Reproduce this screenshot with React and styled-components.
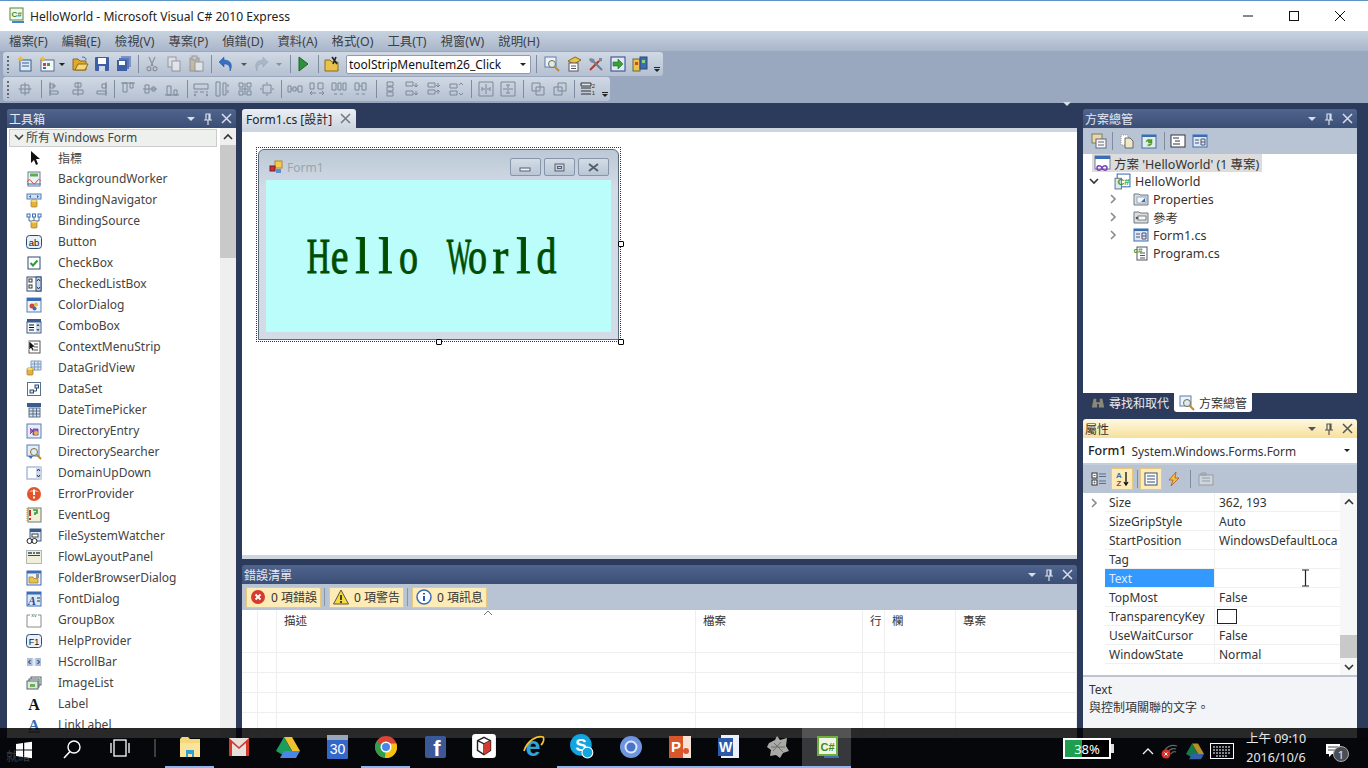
import React from "react";
import styled, { createGlobalStyle } from "styled-components";

const GlobalStyle = createGlobalStyle`
  html, body {
    margin: 0;
    width: 1368px;
    height: 768px;
    overflow: hidden;
    font-family: "Noto Sans", "Noto Sans CJK TC", sans-serif;
    font-size: 12.5px;
    color: #333;
  }
  * { box-sizing: border-box; }
`;

const Page = styled.div`
  width: 1368px;
  height: 768px;
  display: flex;
  flex-direction: column;
  overflow: hidden;
  background: #2c3b5c;
`;

const TitleBar = styled.div`
  height: 31px;
  flex: none;
  display: flex;
  align-items: center;
  padding-left: 9px;
  gap: 5px;
  background: #fff;
  border-top: 1px solid #5b93c4;
`;

const TitleText = styled.span`
  font-size: 12.1px;
  color: #222;
`;

const WinButtons = styled.div`
  margin-left: auto;
  margin-right: 5px;
  display: flex;
`;

const WinButton = styled.div`
  width: 46px;
  height: 30px;
  display: flex;
  align-items: center;
  justify-content: center;
`;

const MenuBar = styled.div`
  height: 20px;
  flex: none;
  display: flex;
  align-items: center;
  gap: 14px;
  padding-left: 9px;
  background: linear-gradient(#c8d3e0, #a9b6ca);
`;

const MenuItem = styled.span`
  font-size: 12.4px;
  color: #3a3f48;
`;

const ToolArea = styled.div`
  height: 52px;
  flex: none;
  display: flex;
  flex-direction: column;
  gap: 1px;
  padding: 1px 0 0 3px;
  background: #9aa8bf;
`;

const ToolRow = styled.div`
  height: 24px;
  width: ${(p) => p.$w}px;
  display: flex;
  align-items: center;
  background: linear-gradient(#d0d9e4, #b5c0d1);
  border-radius: 3px;
`;

const Grip = styled.div`
  width: 10px;
  height: 17px;
  margin-right: ${(p) => p.$mr || 1}px;
  flex: none;
  background: radial-gradient(circle at 1px 1px, #5e6a7c 1px, transparent 1.2px) 4px 0 / 3px 4px repeat-y;
`;

const ToolBtn = styled.div`
  width: ${(p) => p.$w || 22}px;
  height: 22px;
  margin-left: ${(p) => p.$ml || 0}px;
  flex: none;
  display: flex;
  align-items: center;
  justify-content: center;
  opacity: ${(p) => (p.$dim ? 0.5 : 1)};
`;

const ToolSep = styled.div`
  width: ${(p) => p.$w || 6}px;
  height: 18px;
  flex: none;
  position: relative;
  &::after {
    content: "";
    position: absolute;
    left: 50%;
    top: 0;
    bottom: 0;
    width: 1px;
    background: #7f8ca0;
  }
`;

const ComboBox = styled.div`
  width: 185px;
  height: 19px;
  margin-left: 3px;
  flex: none;
  display: flex;
  align-items: center;
  justify-content: space-between;
  padding: 0 4px 0 2px;
  background: #fff;
  border: 1px solid #8e9bb0;
  border-radius: 2px;
  font-size: 12px;
  color: #111;
`;

const Caret = styled.i`
  width: 0;
  height: 0;
  flex: none;
  border-left: ${(p) => p.$s || 3}px solid transparent;
  border-right: ${(p) => p.$s || 3}px solid transparent;
  border-top: ${(p) => p.$s || 3}px solid ${(p) => p.$c || "#222"};
`;

const Overflow = styled.div`
  width: 12px;
  height: 22px;
  flex: none;
  display: flex;
  flex-direction: column;
  align-items: center;
  justify-content: flex-end;
  gap: 1px;
  padding-bottom: 3px;
  &::before {
    content: "";
    width: 6px;
    height: 1px;
    background: #222;
  }
`;

const Dock = styled.div`
  flex: 1;
  min-height: 0;
  display: flex;
  gap: 6px;
  padding: 6px 11px 0 7px;
  background: #2c3b5c;
`;

const LeftPanel = styled.div`
  width: 229px;
  flex: none;
  display: flex;
  flex-direction: column;
`;

const CenterColumn = styled.div`
  width: 835px;
  flex: none;
  display: flex;
  flex-direction: column;
`;

const RightColumn = styled.div`
  width: 274px;
  flex: none;
  display: flex;
  flex-direction: column;
`;

const PanelHeader = styled.div`
  height: 19px;
  flex: none;
  display: flex;
  align-items: center;
  justify-content: space-between;
  padding: 0 4px 0 2px;
  border-radius: 3px 3px 0 0;
  background: ${(p) =>
    p.$active ? "linear-gradient(#fdf8e2, #f7e09a)" : "linear-gradient(#4f658e, #3b4e75)"};
  color: ${(p) => (p.$active ? "#333" : "#e6eaf2")};
  font-size: 12px;
`;

const HeaderTools = styled.div`
  display: flex;
  align-items: center;
  gap: 7px;
`;

const ToolboxBody = styled.div`
  flex: 1;
  min-height: 0;
  display: flex;
  background: #fff;
`;

const ToolboxList = styled.div`
  width: 213px;
  flex: none;
  overflow: hidden;
`;

const GroupHeader = styled.div`
  height: 18px;
  margin: 1px 3px 0 2px;
  display: flex;
  align-items: center;
  gap: 2px;
  padding: 0 0 2px 4px;
  background: #eef0ee;
  border: 1px solid #ccc;
  color: #444;
  font-size: 12px;
`;

const ToolItem = styled.div`
  height: 21px;
  display: flex;
  align-items: center;
  gap: 16px;
  padding-left: 19px;
  color: #444;
  font-size: 12px;
`;

const ScrollTrack = styled.div`
  width: ${(p) => p.$w || 15}px;
  flex: none;
  display: flex;
  flex-direction: column;
  background: #efefef;
`;

const ScrollArrow = styled.div`
  height: ${(p) => p.$h || 17}px;
  flex: none;
  display: flex;
  align-items: center;
  justify-content: center;
`;

const ScrollThumb = styled.div`
  height: ${(p) => p.$h}px;
  margin-top: ${(p) => p.$top || 0}px;
  flex: none;
  background: #c9c9c9;
`;

const TabStrip = styled.div`
  height: 19px;
  flex: none;
  display: flex;
  align-items: flex-end;
  justify-content: space-between;
  padding-right: 6px;
`;

const TabMenu = styled.div`
  padding-bottom: 5px;
`;

const DocTab = styled.div`
  width: 114px;
  height: 19px;
  display: flex;
  align-items: center;
  justify-content: space-between;
  padding: 0 5px 0 4px;
  border-radius: 3px 3px 0 0;
  background: linear-gradient(#eceff4, #cfd6e1);
  color: #222;
  font-size: 12px;
`;

const StripeBar = styled.div`
  height: 4px;
  flex: none;
  background: #cdd5e0;
`;

const DesignSurface = styled.div`
  height: 423px;
  flex: none;
  padding: 15px 0 0 14px;
  background: #fff;
`;

const Selection = styled.div`
  position: relative;
  width: 365px;
  height: 195px;
  padding: 1px;
  border: 1px dotted #333;
`;

const Handle = styled.i`
  position: absolute;
  left: ${(p) => p.$x}px;
  top: ${(p) => p.$y}px;
  width: 6px;
  height: 6px;
  background: #fff;
  border: 1px solid #000;
  border-radius: 1px;
`;

const FormWindow = styled.div`
  height: 100%;
  display: flex;
  flex-direction: column;
  padding: 0 7px 7px;
  background: linear-gradient(#bcc8d6, #d2dbe6 20%);
  border: 1px solid #5a6a7c;
  border-radius: 6px 6px 0 0;
`;

const FormTitle = styled.div`
  height: 30px;
  flex: none;
  display: flex;
  align-items: center;
  gap: 4px;
  padding: 4px 2px 0 3px;
  color: #9aa4b1;
  font-size: 12px;
`;

const FormButtons = styled.div`
  margin-left: auto;
  display: flex;
  gap: 3px;
`;

const FormButton = styled.div`
  width: 31px;
  height: 18px;
  display: flex;
  align-items: center;
  justify-content: center;
  border: 1px solid #8795a8;
  border-radius: 2px;
  background: linear-gradient(#d3dce7, #bac6d5);
`;

const FormClient = styled.div`
  flex: 1;
  display: flex;
  align-items: center;
  justify-content: center;
  padding: 0 14px 0 0;
  background: #bbfdfb;
`;

const HelloLabel = styled.div`
  display: flex;
  font-family: "Liberation Serif", serif;
  font-size: 38px;
  line-height: 1;
  color: #004d00;
  -webkit-text-stroke: 0.7px #004d00;
  white-space: pre;
`;

const HelloChar = styled.span`
  display: inline-block;
  width: 23px;
  text-align: center;
  transform: scale(${(p) => p.$x}, 1.32);
`;

const DockGap = styled.div`
  height: 6px;
  flex: none;
`;

const PanelToolbar = styled.div`
  height: ${(p) => p.$h || 26}px;
  flex: none;
  display: flex;
  align-items: center;
  padding-left: ${(p) => p.$pl || 0}px;
  background: #b8c4d4;
`;

const FilterBtn = styled.div`
  height: 21px;
  display: flex;
  align-items: center;
  gap: 5px;
  padding: 0 3px 0 3px;
  background: #fdebb8;
  border: 1px solid #e6c97e;
  font-size: 12px;
  color: #333;
`;

const FilterSep = styled.i`
  width: 1px;
  height: 18px;
  margin: 0 4px 0 3px;
  background: #8595ab;
`;

const ErrorList = styled.div`
  position: relative;
  flex: 1;
  min-height: 0;
  overflow: hidden;
  background: #fff;
`;

const ErrorRow = styled.div`
  height: ${(p) => p.$h || 20}px;
  display: grid;
  grid-template-columns: 16px 19px 419px 167px 22px 71px 121px;
  border-bottom: 1px solid #eee;
`;

const ErrorCell = styled.div`
  padding: 2px 0 0 7px;
  border-right: 1px solid #eee;
  font-size: 11.5px;
  color: #333;
`;

const SortMark = styled.svg`
  position: absolute;
  left: 241px;
  top: 0;
  width: 10px;
  height: 6px;
`;

const SolutionPanel = styled.div`
  height: 310px;
  flex: none;
  display: flex;
  flex-direction: column;
`;

const TreeBody = styled.div`
  flex: 1;
  background: #fff;
`;

const TreeRow = styled.div`
  width: ${(p) => (p.$sel ? "170px" : "auto")};
  height: 18px;
  display: flex;
  align-items: center;
  margin-left: ${(p) => (p.$sel ? 9 : 0)}px;
  padding-left: ${(p) => (p.$sel ? 2 : p.$indent)}px;
  gap: 4px;
  background: ${(p) => (p.$sel ? "#dcdcdc" : "transparent")};
  color: #333;
  white-space: nowrap;
`;

const TreeChevron = styled.div`
  width: 16px;
  margin-right: 8px;
  flex: none;
  display: flex;
  justify-content: center;
`;

const BottomTabs = styled.div`
  height: 26px;
  flex: none;
  display: flex;
  align-items: flex-start;
  padding-left: 3px;
`;

const BottomTab = styled.div`
  height: 19px;
  display: flex;
  align-items: center;
  gap: 4px;
  padding: 0 5px;
  color: ${(p) => (p.$active ? "#333" : "#e6eaf2")};
  background: ${(p) => (p.$active ? "#fff" : "transparent")};
  border-radius: 0 0 3px 3px;
  font-size: 12px;
`;

const PropsPanel = styled.div`
  flex: 1;
  min-height: 0;
  display: flex;
  flex-direction: column;
`;

const ObjectBar = styled.div`
  height: 27px;
  flex: none;
  display: flex;
  align-items: center;
  padding: 0 7px 0 5px;
  gap: 5px;
  background: #fff;
  color: #333;
  border-bottom: 2px solid #c4cedb;
`;

const ObjectName = styled.span`
  font-weight: 500;
  color: #222;
`;

const ObjectType = styled.span`
  flex: 1;
  font-size: 11.9px;
`;

const ActiveTool = styled.div`
  width: 22px;
  height: 22px;
  display: flex;
  align-items: center;
  justify-content: center;
  background: #fdebb8;
  border: 1px solid #e6c97e;
`;

const PropGrid = styled.div`
  position: relative;
  height: 182px;
  flex: none;
  display: flex;
  background: #fff;
`;

const PropList = styled.div`
  flex: 1;
  min-width: 0;
`;

const PropRow = styled.div`
  height: 19px;
  display: grid;
  grid-template-columns: 22px 110px 125px;
  align-items: stretch;
  font-size: 12px;
`;

const PropGutter = styled.div`
  display: flex;
  align-items: center;
  justify-content: center;
`;

const PropName = styled.div`
  display: flex;
  align-items: center;
  padding-left: 4px;
  background: ${(p) => (p.$sel ? "#3399ff" : "transparent")};
  color: ${(p) => (p.$sel ? "#dceeff" : "#333")};
  border-bottom: 1px solid #f0f0f0;
  border-right: 1px solid #f0f0f0;
`;

const PropValue = styled.div`
  display: flex;
  align-items: center;
  padding-left: 4px;
  white-space: nowrap;
  color: #333;
  border-bottom: 1px solid #f0f0f0;
`;

const ColorSwatch = styled.i`
  width: 20px;
  height: 15px;
  margin-left: -2px;
  background: #fff;
  border: 1px solid #222;
`;

const TextCursor = styled.svg`
  position: absolute;
  left: 218px;
  top: 76px;
  width: 9px;
  height: 18px;
`;

const PropScroll = styled(ScrollTrack)`
  width: 17px;
  background: #f7f7f7;
`;

const Description = styled.div`
  flex: 1;
  padding: 4px 6px;
  background: #f3f4f7;
  border-top: 2px solid #bfc5cf;
  font-size: 12px;
  line-height: 18px;
  color: #333;
`;

const Taskbar = styled.div`
  position: relative;
  height: 30px;
  flex: none;
  display: flex;
  align-items: flex-end;
  background: #05070a;
  &::before {
    content: "";
    position: absolute;
    left: 0;
    right: 0;
    top: -10px;
    height: 10px;
    background: rgba(0, 0, 0, 0.84);
  }
`;

const StatusGhost = styled.span`
  position: absolute;
  left: 6px;
  top: 9px;
  font-size: 12px;
  color: #3c3f44;
`;

const TaskSlot = styled.div`
  position: relative;
  width: ${(p) => p.$w || 49}px;
  height: ${(p) => (p.$active ? 40 : 30)}px;
  flex: none;
  display: flex;
  align-items: flex-end;
  justify-content: center;
  padding-bottom: 7px;
  background: ${(p) => (p.$active ? "rgba(255,255,255,0.2)" : "transparent")};
  border-bottom: ${(p) => (p.$run ? "2px solid #8fb4f0" : "2px solid transparent")};
  background-clip: padding-box;
`;

const TaskDivider = styled.div`
  width: 21px;
  height: 30px;
  flex: none;
  display: flex;
  justify-content: center;
  padding: 1px 0 11px;
  &::before {
    content: "";
    width: 2px;
    background: #3a3d42;
  }
`;

const Battery = styled.div`
  position: relative;
  width: 48px;
  height: 21px;
  margin: 0 26px 9px 212px;
  flex: none;
  display: flex;
  align-items: center;
  justify-content: center;
  border: 2px solid #fff;
  background: linear-gradient(90deg, #1e9e4e 38%, #000 38%);
  color: #fff;
  font-size: 13px;
  &::after {
    content: "";
    position: absolute;
    right: -5px;
    top: 4px;
    width: 3px;
    height: 9px;
    background: #ddd;
  }
`;

const TrayIcon = styled.div`
  width: ${(p) => p.$w || 24}px;
  height: 30px;
  flex: none;
  display: flex;
  align-items: center;
  justify-content: center;
  padding-bottom: 5px;
`;

const Clock = styled.div`
  position: relative;
  width: 80px;
  height: 38px;
  flex: none;
  display: flex;
  flex-direction: column;
  align-items: center;
  justify-content: space-between;
  padding-bottom: 1px;
  color: #e8e8e8;
  font-size: 12.5px;
  line-height: 18px;
`;

const NotifyWrap = styled.div`
  position: relative;
  width: 30px;
  height: 30px;
  margin-left: 2px;
  flex: none;
  display: flex;
  align-items: center;
  justify-content: center;
  padding-bottom: 5px;
`;

const NotifyBadge = styled.span`
  position: absolute;
  left: 15px;
  top: 8px;
  width: 16px;
  height: 16px;
  display: flex;
  align-items: center;
  justify-content: center;
  border-radius: 50%;
  background: #4a4d52;
  border: 1px solid #aaa;
  color: #eee;
  font-size: 11px;
`;

const IconSvg = styled.svg`
  width: ${(p) => p.$s}px;
  height: ${(p) => p.$s}px;
  flex: none;
  display: block;
  overflow: visible;
`;

const I = ({ s = 16, vb = "0 0 16 16", children }) => (
  <IconSvg $s={s} viewBox={vb}>
    {children}
  </IconSvg>
);

const Chevron = ({ dir = "right", c = "#8a8a8a", s = 10 }) => {
  const d = { right: "M3 1l4 4-4 4", down: "M1 3l4 4 4-4", up: "M1 7l4-4 4 4" }[dir];
  return (
    <I s={s} vb="0 0 10 10">
      <path d={d} fill="none" stroke={c} strokeWidth="1.6" />
    </I>
  );
};

const HeaderButtons = ({ c = "#d9dfea" }) => (
  <HeaderTools>
    <Caret $s={4} $c={c} />
    <I s={12} vb="0 0 12 12">
      <path d="M4 1h4v6H4zM2 7h8M6 7v5M7 1v6" fill="none" stroke={c} strokeWidth="1.2" />
    </I>
    <I s={11} vb="0 0 11 11">
      <path d="M1 1l9 9M10 1l-9 9" stroke={c} strokeWidth="1.5" />
    </I>
  </HeaderTools>
);

const db = (x, y) => (
  <g>
    <rect x={x} y={y} width="6" height="7" rx="1" fill="#e2b23a" stroke="#a37a1c" strokeWidth=".7" />
    <ellipse cx={x + 3} cy={y + 1} rx="3" ry="1" fill="#f7df8c" />
  </g>
);

const toolIcons = {
  pointer: <path d="M5 1v12l3-3 2 5 2-1-2-5h4z" fill="#111" />,
  BackgroundWorker: (
    <g>
      <rect x="2" y="1" width="12" height="14" fill="#eef2f6" stroke="#6b7c93" />
      <rect x="4" y="2.5" width="8" height="3" fill="#59b04a" />
      <path d="M1 11c2-3 3-3 5 0s3 2 5-1 2-1 4 0" fill="none" stroke="#d0453a" />
      <path d="M1 13h14" stroke="#3b6db5" />
    </g>
  ),
  BindingNavigator: (
    <g>
      <rect x="1" y="2" width="14" height="5" fill="#cfe0f3" stroke="#5a7fb0" />
      <path d="M3 4.5l2-1.5v3zM13 4.5l-2-1.5v3z" fill="#2a62a8" />
      {db(5, 8)}
    </g>
  ),
  BindingSource: (
    <g>
      <path d="M3 4v4h10V4M8 4v5" fill="none" stroke="#3b6db5" />
      <rect x="1" y="1" width="3" height="3" fill="#fff" stroke="#3b6db5" />
      <rect x="6.5" y="1" width="3" height="3" fill="#fff" stroke="#3b6db5" />
      <rect x="12" y="1" width="3" height="3" fill="#fff" stroke="#3b6db5" />
      {db(5, 8)}
    </g>
  ),
  Button: (
    <g>
      <rect x=".5" y="1.5" width="15" height="13" rx="3" fill="#e9f0f8" stroke="#2d4a73" />
      <text x="8" y="11.5" fontSize="9.5" textAnchor="middle" fill="#111" fontFamily="Liberation Sans">ab</text>
    </g>
  ),
  CheckBox: (
    <g>
      <rect x="2" y="2" width="12" height="12" fill="#fff" stroke="#2d4a73" />
      <path d="M4.5 8l2.5 2.5 4.5-5" fill="none" stroke="#2c9a3a" strokeWidth="2" />
    </g>
  ),
  CheckedListBox: (
    <g>
      <rect x="1" y="1" width="14" height="14" fill="#fff" stroke="#2d4a73" />
      <rect x="3" y="3" width="3" height="3" fill="#fff" stroke="#333" />
      <rect x="3" y="9" width="3" height="3" fill="#fff" stroke="#333" />
      <rect x="10" y="1" width="5" height="14" fill="#c9d8ea" stroke="#2d4a73" />
      <path d="M11 5l1.5-2 1.5 2M11 11l1.5 2 1.5-2" fill="none" stroke="#333" />
    </g>
  ),
  ColorDialog: (
    <g>
      <rect x="1" y="1" width="14" height="14" fill="#eef3fa" stroke="#5a7fb0" />
      <rect x="1" y="1" width="14" height="3" fill="#3b6db5" />
      <circle cx="6" cy="9" r="2.5" fill="#d0453a" />
      <circle cx="10" cy="7.5" r="2" fill="#e8b93c" />
      <circle cx="8.5" cy="11.5" r="2" fill="#3b6db5" />
    </g>
  ),
  ComboBox: (
    <g>
      <rect x="1" y="1" width="14" height="3" fill="#3b5c8a" />
      <rect x="1" y="4" width="14" height="11" fill="#f4f7fb" stroke="#3b5c8a" />
      <path d="M3 7h5M3 9.5h5M3 12h5" stroke="#111" />
      <rect x="10" y="5" width="4" height="9" fill="#c9d8ea" />
      <path d="M11 8l1-1.500 1 1.500M11 11l1 1.500 1-1.500" fill="none" stroke="#333" />
    </g>
  ),
  ContextMenuStrip: (
    <g>
      <rect x="3" y="2" width="11" height="12" fill="#fff" stroke="#555" />
      <path d="M8 5h4M8 8h4M8 11h4" stroke="#444" />
      <path d="M3 2v9l2-2 1.500 3 1.500-1-1.500-3h3z" fill="#111" stroke="#fff" strokeWidth=".5" />
    </g>
  ),
  DataGridView: (
    <g>
      <path d="M5 1h10v9H5z" fill="#dbe6f3" stroke="#7f9cc2" />
      <path d="M5 4h10M5 7h10M8.500 1v9M12 1v9" stroke="#7f9cc2" />
      {db(1, 8)}
    </g>
  ),
  DataSet: (
    <g>
      <rect x="1.500" y="1.500" width="13" height="13" fill="#fff" stroke="#5a6f8a" />
      <rect x="4" y="9" width="3.500" height="3" fill="#cfe0f3" stroke="#2d4a73" />
      <rect x="9" y="4" width="3.500" height="3" fill="#cfe0f3" stroke="#2d4a73" />
      <path d="M7.500 10h3V7" fill="none" stroke="#2d4a73" />
    </g>
  ),
  DateTimePicker: (
    <g>
      <rect x="1" y="1" width="14" height="4" fill="#3b5c8a" />
      <rect x="3" y="6" width="11" height="9" fill="#dbe4ef" stroke="#5a6f8a" />
      <path d="M3 9h11M3 12h11M7 6v9M10.500 6v9" stroke="#5a6f8a" />
    </g>
  ),
  DirectoryEntry: (
    <g>
      <rect x="1" y="1" width="14" height="14" fill="#e6ecfa" stroke="#5a7fb0" />
      <path d="M4 5l3 3-3 3M7 6h5v6H7z" fill="#a15ac0" stroke="#5a3a8c" strokeWidth=".8" />
      <circle cx="10" cy="10" r="2" fill="#e8b93c" />
    </g>
  ),
  DirectorySearcher: (
    <g>
      <rect x="1" y="1" width="12" height="11" fill="#e6ecfa" stroke="#5a7fb0" />
      <circle cx="8" cy="8" r="3.500" fill="#d8ecf7" stroke="#8a6b2e" />
      <path d="M10.500 10.500L15 15" stroke="#c08a30" strokeWidth="2" />
      <path d="M2 12l3 3 2-3z" fill="#3b6db5" />
    </g>
  ),
  DomainUpDown: (
    <g>
      <rect x="1" y="2" width="14" height="12" fill="#fff" stroke="#7f9cc2" />
      <rect x="10" y="2" width="5" height="12" fill="#c9d8ea" />
      <path d="M11 6l1.500-2 1.500 2M11 10l1.500 2 1.500-2" fill="none" stroke="#333" />
    </g>
  ),
  ErrorProvider: (
    <g>
      <circle cx="8" cy="8" r="7" fill="#e2542c" />
      <path d="M3 6a5.500 4 0 0 1 10 0z" fill="#f59a7c" />
      <path d="M8 3.500v5.500M8 10.500v2" stroke="#fff" strokeWidth="2" />
    </g>
  ),
  EventLog: (
    <g>
      <rect x="2" y="1" width="13" height="14" fill="#f2f0d8" stroke="#6d7f6a" />
      <path d="M4 3v6M4 11v2" stroke="#d0322a" strokeWidth="2" />
      <path d="M7 3h4v3H9v2" fill="none" stroke="#2c9a3a" strokeWidth="1.600" />
      <path d="M1 1v14" stroke="#c08a30" strokeDasharray="1 1" />
    </g>
  ),
  FileSystemWatcher: (
    <g>
      <rect x="4" y="1" width="11" height="12" fill="#dbe6f3" stroke="#3b5c8a" />
      <path d="M4 1h11v3H4z" fill="#3b5c8a" />
      <circle cx="3.500" cy="13" r="2.500" fill="#fff" stroke="#222" />
      <circle cx="8.500" cy="13" r="2.500" fill="#fff" stroke="#222" />
      <rect x="6" y="6" width="6" height="3" fill="#fff" stroke="#444" />
    </g>
  ),
  FlowLayoutPanel: (
    <g>
      <rect x=".5" y="1.500" width="15" height="13" fill="#eef0dc" stroke="#777" strokeDasharray="1 1" />
      <path d="M2 4h4M7 4h2M10 4h4" stroke="#2d4a73" strokeWidth="1.500" />
      <path d="M2 6.500h12" stroke="#2d4a73" />
    </g>
  ),
  FolderBrowserDialog: (
    <g>
      <rect x="1" y="1" width="14" height="14" fill="#eef3fa" stroke="#3b6db5" />
      <rect x="1" y="1" width="14" height="2.500" fill="#3b6db5" />
      <path d="M3 7h4l1 1.500h4V13H3z" fill="#e8c24a" stroke="#9c7a1e" strokeWidth=".7" />
      <path d="M10 5h3M10 7h3" stroke="#333" />
    </g>
  ),
  FontDialog: (
    <g>
      <rect x="1" y="1" width="14" height="14" fill="#dde8f6" stroke="#3b6db5" />
      <rect x="1" y="1" width="14" height="2.500" fill="#3b6db5" />
      <text x="6" y="14" fontSize="12" fontWeight="700" fontStyle="italic" textAnchor="middle" fill="#1c4f9c" fontFamily="Liberation Serif">A</text>
      <path d="M11 7h3M11 10h3" stroke="#333" />
    </g>
  ),
  GroupBox: (
    <g>
      <path d="M4 3H1v12h14V3h-3" fill="none" stroke="#8a8a8a" />
      <text x="8" y="5" fontSize="5.500" textAnchor="middle" fill="#555" fontFamily="Liberation Sans">xv</text>
    </g>
  ),
  HelpProvider: (
    <g>
      <rect x=".5" y="1.500" width="15" height="13" rx="3" fill="#e9f0f8" stroke="#2d4a73" />
      <text x="8" y="11.500" fontSize="9" textAnchor="middle" fill="#111" fontFamily="Liberation Sans">F1</text>
    </g>
  ),
  HScrollBar: (
    <g>
      <rect x="1" y="4" width="14" height="8" fill="#c4d3ea" />
      <rect x="1" y="4" width="5" height="8" fill="#aabfe0" />
      <rect x="10" y="4" width="5" height="8" fill="#aabfe0" />
      <path d="M4.500 6l-2 2 2 2M11.500 6l2 2-2 2" fill="none" stroke="#222" />
      <path d="M8 4v8" stroke="#fff" />
    </g>
  ),
  ImageList: (
    <g>
      <rect x="5" y="2" width="10" height="8" fill="#eef2f6" stroke="#566" />
      <rect x="3" y="4" width="10" height="8" fill="#eef2f6" stroke="#566" />
      <rect x="1" y="6" width="11" height="8" fill="#dfeadf" stroke="#566" />
      <rect x="4" y="9" width="5" height="3" fill="#6fae5e" />
    </g>
  ),
  Label: <text x="8" y="14" fontSize="16" fontWeight="700" textAnchor="middle" fill="#111" fontFamily="Liberation Serif">A</text>,
  LinkLabel: (
    <g>
      <text x="8" y="13" fontSize="15" fontWeight="700" textAnchor="middle" fill="#3b6db5" fontFamily="Liberation Serif">A</text>
      <path d="M2 15h12" stroke="#3b6db5" />
    </g>
  ),
};

const toolItems = [
  ["pointer", "指標"],
  ...Object.keys(toolIcons).slice(1).map((k) => [k, k]),
];

const ToolbarGlyph = ({ d, c = "#7d8898", fill = "none", w = 1 }) => (
  <I>
    <path d={d} fill={fill} stroke={c} strokeWidth={w} />
  </I>
);

const layoutGlyphs = [
  "M1.500 8h13M8 1.500v13M4 4h8v8H4z",
  "M2 1v14M2 3h4v4H2zM2 10h8v3H2zM8 5H4",
  "M8 1v14M5 2h6v4H5zM3 9h10v4H3z",
  "M14 1v14M10 3h4v4h-4zM5 10h9v3H5z",
  "M1 2h14M3 2v9h4V2zM10 2v5h3V2z",
  "M1 8h14M3 4h4v8H3zM10 6h3v4h-3z",
  "M1 14h14M3 5h4v9H3zM10 9h3v5h-3z",
  "M1 3h14v5H1zM1 11h4M7 11h4M13 11h2M3 13l-2 1 2 1M13 13l2 1-2 1",
  "M1 1h4v14H1zM8 2h3v12H8zM13 3v3M13 9v3",
  "M2 2h4v4H2zM10 2h4v4h-4zM2 10h4v4H2zM10 10h4v4h-4zM8 2v12M2 8h12",
  "M4 4h8v8H4zM1 8h2M13 8h2M8 1v2M8 13v2",
  "M1 5h3v6H1zM6 6h3v4H6zM11 5h4v6h-4zM4 8h2M9 8h2",
  "M1 2h4v6H1zM9 2h5v6H9zM2 12h5M10 12h5M3 10l-2 2 2 2M13 10l2 2-2 2",
  "M1 2h4v7H1zM7 2h3v7H7zM12 2h3v7h-3zM3 13h3M9 13h3",
  "M2 2h4v7H2zM9 2h4v7H9zM6 5h3M3 13h3M9 13h3",
  "M5 1h6v4H5zM5 6h6v4H5zM5 11h6v4H5zM8 5v1M8 10v1",
  "M2 1h7v4H2zM2 10h7v4H2zM12 2v4M12 10v4M10 4l2 2 2-2M10 12l2 2 2-2",
  "M2 2h7v4H2zM2 9h7v4H2zM12 2v4M12 9v4M10 11l2-2 2 2M10 4l2 2 2-2",
  "M2 3h7v4H2zM2 10h7v4H2zM11 4l2-2 2 2M11 12l2 2 2-2",
  "M1 1h14v14H1zM8 3v10M4 8h3M9 8h3M4 6v4M12 6v4",
  "M1 1h14v14H1zM3 8h10M8 4v3M8 9v3M6 4h4M6 12h4",
  "M2 2h8v8H2zM6 6h8v8H6z",
  "M6 2h8v8H6zM2 6h8v8H2z",
];

// separator width after the glyph at that index
const row2Seps = { 0: 9, 3: 6, 6: 7, 10: 6, 14: 7, 18: 8, 20: 8, 22: 6 };

const Solution = {
  view: (
    <I>
      <rect x="1" y="1" width="10" height="9" fill="#e9d9a6" stroke="#7d7a68" />
      <rect x="5" y="6" width="10" height="9" fill="#f5f7fa" stroke="#667" />
      <path d="M7 9h6M7 12h6" stroke="#667" />
    </I>
  ),
  copy: (
    <I>
      <path d="M2 2h7v10H2z" fill="#fff" stroke="#999" strokeDasharray="1 1" />
      <path d="M6 5h5l3 3v7H6z" fill="#eee8c8" stroke="#666" />
    </I>
  ),
  refresh: (
    <I>
      <rect x="1" y="2" width="14" height="13" fill="#e4eee4" stroke="#3b6db5" />
      <path d="M1 2h14v2H1z" fill="#3b6db5" />
      <path d="M5 9a3 3 0 0 1 5-2l1-1v4H7l1-1a2 2 0 0 0-3 0zM11 10a3 3 0 0 1-5 2" fill="#4e9a33" stroke="#4e9a33" strokeWidth=".5" />
    </I>
  ),
  code: (
    <I>
      <rect x="1" y="2" width="14" height="12" fill="#fff" stroke="#334" />
      <path d="M3 5h6M5 8h5M3 11h7" stroke="#334" />
    </I>
  ),
  design: (
    <I>
      <rect x="1" y="2" width="14" height="12" fill="#dde8f6" stroke="#3b6db5" />
      <path d="M1 2h14v2H1z" fill="#3b6db5" />
      <path d="M3 7h4M3 10h4M9 6h4v6H9zM9 9h4" stroke="#556" fill="none" />
    </I>
  ),
};

const SolutionIcon = () => (
  <I>
    <rect x="1" y="1" width="15" height="13" fill="#fff" stroke="#6b7c93" />
    <rect x="1" y="1" width="15" height="3" fill="#3b6db5" />
    <path d="M3 13c0-3 4-3 5 0s5 3 5 0-4-3-5 0-5 3-5 0z" fill="none" stroke="#7a3fb8" strokeWidth="1.500" />
  </I>
);

const ProjectIcon = () => (
  <I s={17}>
    <rect x="3" y="1" width="12" height="12" fill="#fff" stroke="#3b6db5" />
    <rect x="1" y="5" width="6" height="10" fill="#dce8f5" stroke="#6b7c93" />
    <text x="9" y="11" fontSize="9" fontWeight="700" textAnchor="middle" fill="#2c9a3a" fontFamily="Liberation Sans">C#</text>
  </I>
);

const PropertiesIcon = () => (
  <I>
    <path d="M1 3h5l1 1h8v10H1z" fill="#d7e0ea" stroke="#6e7a8a" />
    <rect x="4" y="6" width="9" height="6" fill="#f4f7fb" stroke="#6e7a8a" strokeWidth=".6" />
    <path d="M8 11l4-4v4z" fill="#3b6db5" />
  </I>
);

const RefsIcon = () => (
  <I>
    <path d="M1 3h5l1 1h8v10H1z" fill="#dedede" stroke="#6e7a8a" />
    <rect x="5" y="7" width="8" height="4" fill="#f4f7fb" stroke="#555" strokeWidth=".7" />
    <circle cx="4" cy="9" r="1.300" fill="#555" />
  </I>
);

const FindIcon = () => (
  <I>
    <rect x="1" y="1" width="11" height="10" fill="#eef3fa" stroke="#5a7fb0" />
    <circle cx="8" cy="8" r="3.500" fill="#d8ecf7" stroke="#7c6a3e" />
    <path d="M10.500 10.500L15 15" stroke="#c08a30" strokeWidth="2" />
  </I>
);

const Windows = () => (
  <I s={18} vb="0 0 18 18">
    <path d="M1 3l7-1v6.500H1zM9.200 1.800L17 .8v7.700H9.200zM1 9.500h7V16l-7-1zM9.200 9.500H17v7.700l-7.800-1.100z" fill="#fff" />
  </I>
);

const taskIcons = [
  <I s={24} vb="0 0 24 24" key="folder">
    <path d="M2 4l2-2h6l2 2h10v18H2z" fill="#f5d77d" />
    <path d="M2 8h20v14H2z" fill="#fbe39a" />
    <path d="M8 15h8v7h-2v-3h-4v3H8z" fill="#2f9fd8" />
  </I>,
  <I s={24} vb="0 0 24 24" key="gmail">
    <rect x="2" y="3" width="20" height="18" fill="#e6e1dc" />
    <path d="M2 3l10 9 10-9v18h-3V8l-7 6-7-6v13H2z" fill="#d33a2c" />
  </I>,
  <I s={24} vb="0 0 24 24" key="drive">
    <path d="M8 2h8l8 14h-8z" fill="#f4c12e" />
    <path d="M8 2l8 14-4 7L0 16z" fill="#1da462" opacity=".95" />
    <path d="M4 23l4-7h16l-4 7z" fill="#4a86e8" />
  </I>,
  <I s={24} vb="0 0 24 24" key="cal">
    <rect x="2" y="0" width="21" height="24" rx="1" fill="#3468c8" />
    <rect x="2" y="0" width="21" height="5" fill="#9aa7b8" />
    <text x="12.500" y="19" fontSize="14" textAnchor="middle" fill="#fff" fontFamily="Liberation Sans">30</text>
  </I>,
  <I s={24} vb="0 0 24 24" key="chrome">
    <circle cx="12" cy="12" r="11" fill="#db4437" />
    <path d="M12 12L2.500 6.500A11 11 0 0 0 12 23l6-11z" fill="#2f9e4f" />
    <path d="M12 12l-1 11A11 11 0 0 0 22.500 8.500H12z" fill="#f4c20d" />
    <circle cx="12" cy="12" r="5.500" fill="#fff" />
    <circle cx="12" cy="12" r="4" fill="#4a86e8" />
  </I>,
  <I s={24} vb="0 0 24 24" key="fb">
    <rect x="2" y="1" width="21" height="22" rx="2" fill="#3b5998" />
    <text x="14" y="21" fontSize="22" fontWeight="700" textAnchor="middle" fill="#fff" fontFamily="Liberation Sans">f</text>
  </I>,
  <I s={26} vb="0 0 24 24" key="cube">
    <rect x="1" y="1" width="22" height="22" rx="3" fill="#fff" />
    <path d="M12 4l6 3v9l-6 4-6-4V7z" fill="#fff" stroke="#222" strokeWidth="1.300" />
    <path d="M6 7l6 3 6-3M12 10v10" fill="none" stroke="#222" strokeWidth="1.300" />
    <path d="M12 10l6-3v9l-6 4z" fill="#d13b32" />
  </I>,
  <I s={24} vb="0 0 24 24" key="ie">
    <text x="12" y="21" fontSize="27" fontWeight="700" textAnchor="middle" fill="#2ea3dc" fontFamily="Liberation Sans">e</text>
    <path d="M3 16C6 6 16 0 22 2c2 2 0 6-2 8" fill="none" stroke="#f2c233" strokeWidth="1.800" />
  </I>,
  <I s={26} vb="0 0 24 24" key="skype">
    <circle cx="11" cy="11" r="10" fill="#12a5e0" />
    <text x="11" y="17" fontSize="16" fontWeight="700" textAnchor="middle" fill="#fff" fontFamily="Liberation Sans">S</text>
    <circle cx="17" cy="18" r="5" fill="#12a5e0" stroke="#fff" strokeWidth="1" />
  </I>,
  <I s={24} vb="0 0 24 24" key="chromium">
    <circle cx="12" cy="12" r="11" fill="#6f94e0" />
    <circle cx="12" cy="12" r="6.500" fill="#dfe8fa" />
    <circle cx="12" cy="12" r="4.500" fill="#4a74c8" />
  </I>,
  <I s={24} vb="0 0 24 24" key="ppt">
    <rect x="1" y="1" width="22" height="22" fill="#f6e3d6" />
    <rect x="1" y="1" width="14" height="22" fill="#d9552b" />
    <text x="8" y="17" fontSize="15" fontWeight="700" textAnchor="middle" fill="#fff" fontFamily="Liberation Sans">P</text>
    <circle cx="18" cy="16" r="3" fill="#d9552b" />
  </I>,
  <I s={24} vb="0 0 24 24" key="word">
    <rect x="4" y="0" width="18" height="23" fill="#eaf1fa" />
    <path d="M1 3h15v18H1z" fill="#2a5aa8" />
    <text x="8.500" y="17" fontSize="14" fontWeight="700" textAnchor="middle" fill="#fff" fontFamily="Liberation Sans">W</text>
  </I>,
  <I s={24} vb="0 0 24 24" key="grey">
    <path d="M3 8l6-3 2-4 3 4 7-2-1 8 3 5-6 2-3 5-4-3-6 1 1-6-4-3z" fill="#a9a9a6" />
    <path d="M8 8l9 9M15 7l-8 9M5 12h14" stroke="#6e6e6c" strokeWidth="1" />
  </I>,
  <I s={24} vb="0 0 24 24" key="cs">
    <rect x="3" y="2" width="19" height="18" fill="#eef4e4" stroke="#6fae3a" strokeWidth="2" />
    <text x="12.500" y="16" fontSize="11" fontWeight="700" textAnchor="middle" fill="#3c8a28" fontFamily="Liberation Sans">C#</text>
    <path d="M9 22h15" stroke="#3f84d8" strokeWidth="1.500" />
  </I>,
];

const runFlags = [1, 0, 0, 0, 1, 0, 0, 0, 1, 1, 1, 1, 1, 1];

const propRows = [
  ["Size", "362, 193", true],
  ["SizeGripStyle", "Auto"],
  ["StartPosition", "WindowsDefaultLoca"],
  ["Tag", ""],
  ["Text", "", false, true],
  ["TopMost", "False"],
  ["TransparencyKey", "swatch"],
  ["UseWaitCursor", "False"],
  ["WindowState", "Normal"],
];

const menus = ["檔案(F)", "編輯(E)", "檢視(V)", "專案(P)", "偵錯(D)", "資料(A)", "格式(O)", "工具(T)", "視窗(W)", "說明(H)"];

// the designer label is a fixed-pitch serif: each letter sits in its own cell
const helloScale = { H: 0.85, e: 1.05, l: 1.35, o: 1, " ": 1, W: 0.68, r: 1.25, d: 1.05 };

function App() {
  return (
    <Page>
      <GlobalStyle />
      <TitleBar>
        <I s={16}>
          <rect x="1" y="0" width="13" height="12" fill="#f4f8ee" stroke="#4f8a2e" />
          <text x="7.500" y="9" fontSize="8" fontWeight="700" textAnchor="middle" fill="#3c8a28" fontFamily="Liberation Sans">C#</text>
          <path d="M3 14h12" stroke="#3f84d8" strokeWidth="2" />
        </I>
        <TitleText>HelloWorld - Microsoft Visual C# 2010 Express</TitleText>
        <WinButtons>
          <WinButton>
            <I s={12} vb="0 0 12 12"><path d="M1 6h10" stroke="#111" /></I>
          </WinButton>
          <WinButton>
            <I s={12} vb="0 0 12 12"><rect x="1.500" y="1.500" width="9" height="9" fill="none" stroke="#111" /></I>
          </WinButton>
          <WinButton>
            <I s={12} vb="0 0 12 12"><path d="M1 1l10 10M11 1L1 11" stroke="#111" /></I>
          </WinButton>
        </WinButtons>
      </TitleBar>

      <MenuBar>
        {menus.map((m) => (
          <MenuItem key={m}>{m}</MenuItem>
        ))}
      </MenuBar>

      <ToolArea>
        <ToolRow $w={660}>
          <Grip />
          <ToolBtn>
            <I>
              <rect x="3" y="4" width="11" height="11" fill="#dce8f5" stroke="#3b5c8a" />
              <path d="M5 7h7M5 10h7" stroke="#3b5c8a" />
              <path d="M1 3h5M3.500 .5v5" stroke="#e8b93c" strokeWidth="1.500" />
            </I>
          </ToolBtn>
          <ToolBtn>
            <I>
              <rect x="2" y="4" width="13" height="11" fill="#f4f7fb" stroke="#5a6f8a" />
              <rect x="4" y="7" width="3" height="3" fill="#d0453a" />
              <rect x="8" y="7" width="3" height="3" fill="#4e9a33" />
              <rect x="4" y="11" width="3" height="2" fill="#3b6db5" />
              <path d="M1 3h5M3.500 .5v5" stroke="#e8b93c" strokeWidth="1.500" />
            </I>
          </ToolBtn>
          <ToolBtn $w={8}><Caret /></ToolBtn>
          <ToolBtn $ml={3}>
            <I>
              <path d="M1 3h5l2 2h6v9H1z" fill="#e0a92e" stroke="#8a6a1c" />
              <path d="M3 14l3-6h10l-3 6z" fill="#f7d774" stroke="#8a6a1c" />
              <path d="M10 1c3 0 4 1 4 3" fill="none" stroke="#3b6db5" />
            </I>
          </ToolBtn>
          <ToolBtn>
            <I>
              <rect x="1" y="1" width="14" height="14" rx="1" fill="#3c5fa8" />
              <rect x="4" y="2" width="8" height="6" fill="#fff" />
              <rect x="5" y="10" width="6" height="5" fill="#cfd8e6" />
            </I>
          </ToolBtn>
          <ToolBtn>
            <I>
              <rect x="5" y="0" width="10" height="11" fill="#7d94c4" />
              <rect x="3" y="2" width="10" height="11" fill="#5c78b6" />
              <rect x="1" y="4" width="10" height="11" fill="#3c5fa8" />
              <rect x="3" y="5" width="6" height="4" fill="#fff" />
            </I>
          </ToolBtn>
          <ToolSep />
          <ToolBtn $dim>
            <I><path d="M5 1l4 9M11 1L7 10M6 11a2 2 0 1 1-3 2 2 2 0 0 1 3-2zM10 11a2 2 0 1 0 3 2 2 2 0 0 0-3-2z" fill="none" stroke="#555" strokeWidth="1.200" /></I>
          </ToolBtn>
          <ToolBtn $dim>
            <I>
              <rect x="2" y="1" width="8" height="10" fill="#eee" stroke="#666" />
              <rect x="6" y="5" width="8" height="10" fill="#fff" stroke="#666" />
            </I>
          </ToolBtn>
          <ToolBtn $dim>
            <I>
              <rect x="2" y="2" width="9" height="13" fill="#c9a866" stroke="#666" />
              <rect x="4" y="0" width="5" height="4" fill="#bbb" stroke="#666" />
              <rect x="7" y="6" width="8" height="9" fill="#fff" stroke="#666" />
            </I>
          </ToolBtn>
          <ToolSep $w={8} />
          <ToolBtn>
            <I><path d="M6 1L1 6l5 5V8c4 0 6 1 6 7 3-6 1-11-6-11z" fill="#3670c4" stroke="#234e94" strokeWidth=".5" /></I>
          </ToolBtn>
          <ToolBtn $w={14}><Caret $c="#555" /></ToolBtn>
          <ToolBtn $w={20} $dim>
            <I><path d="M10 1l5 5-5 5V8C6 8 4 9 4 15 1 9 3 4 10 4z" fill="#8ea0b8" stroke="#6e7f96" strokeWidth=".5" /></I>
          </ToolBtn>
          <ToolBtn $w={16} $dim><Caret $c="#555" /></ToolBtn>
          <ToolSep $w={5} />
          <ToolBtn>
            <I><path d="M4 1l9 7-9 7z" fill="#2f8f3a" stroke="#1d6a28" /></I>
          </ToolBtn>
          <ToolSep $w={7} />
          <ToolBtn>
            <I>
              <path d="M1 4h5l2 2h6v9H1z" fill="#e8c24a" stroke="#8a6a1c" />
              <path d="M8 1l5 7M12 1L9 8" stroke="#222" strokeWidth="1.600" />
            </I>
          </ToolBtn>
          <ComboBox>
            toolStripMenuItem26_Click
            <Caret />
          </ComboBox>
          <ToolSep $w={10} />
          <ToolBtn><FindIcon /></ToolBtn>
          <ToolBtn>
            <I>
              <path d="M2 5l7-4 6 3-7 4z" fill="#e8c24a" stroke="#8a6a1c" />
              <rect x="3" y="7" width="9" height="8" fill="#fff" stroke="#556" />
              <path d="M5 10h5M5 12.500h5" stroke="#556" />
            </I>
          </ToolBtn>
          <ToolBtn>
            <I>
              <path d="M2 14L11 5" stroke="#b03a2e" strokeWidth="2" />
              <path d="M14 14L5 5" stroke="#6f7c8c" strokeWidth="2" />
              <path d="M2 2l4 1 1 3-3 1-3-3zM11 2h3v3l-3 1z" fill="#7d8898" />
            </I>
          </ToolBtn>
          <ToolBtn>
            <I>
              <rect x="1" y="1" width="14" height="14" fill="#dfe9f5" stroke="#26458a" />
              <path d="M3 6h5V3l5 5-5 5v-3H3z" fill="#3ca032" stroke="#1d6a28" strokeWidth=".6" />
            </I>
          </ToolBtn>
          <ToolBtn>
            <I>
              <rect x="1" y="3" width="7" height="12" fill="#e8c24a" stroke="#6a6a3a" />
              <rect x="8" y="1" width="7" height="12" fill="#3b6db5" stroke="#2d4a73" />
              <rect x="3" y="6" width="3" height="3" fill="#d0453a" />
              <rect x="10" y="4" width="3" height="3" fill="#8fd08a" />
            </I>
          </ToolBtn>
          <Overflow><Caret /></Overflow>
        </ToolRow>
        <ToolRow $w={607}>
          <Grip $mr={0} />
          {layoutGlyphs.map((d, i) => (
            <React.Fragment key={i}>
              <ToolBtn><ToolbarGlyph d={d} /></ToolBtn>
              {row2Seps[i] ? <ToolSep $w={row2Seps[i]} /> : null}
            </React.Fragment>
          ))}
          <ToolBtn>
            <I>
              <path d="M1 2h10v3H1zM1 7h10M1 10h10M1 13h10" fill="#dfe4ea" stroke="#333" />
              <text x="13.500" y="7" fontSize="6" textAnchor="middle" fill="#333" fontFamily="Liberation Sans">2</text>
              <text x="13.500" y="14" fontSize="6" textAnchor="middle" fill="#333" fontFamily="Liberation Sans">1</text>
            </I>
          </ToolBtn>
          <Overflow><Caret /></Overflow>
        </ToolRow>
      </ToolArea>

      <Dock>
        <LeftPanel>
          <PanelHeader>
            工具箱
            <HeaderButtons />
          </PanelHeader>
          <ToolboxBody>
            <ToolboxList>
              <GroupHeader>
                <Chevron dir="down" c="#444" />
                所有 Windows Form
              </GroupHeader>
              {toolItems.map(([icon, label]) => (
                <ToolItem key={label}>
                  <I>{toolIcons[icon]}</I>
                  {label}
                </ToolItem>
              ))}
            </ToolboxList>
            <ScrollTrack $w={16}>
              <ScrollArrow><Chevron dir="up" c="#333" /></ScrollArrow>
              <ScrollThumb $h={113} />
            </ScrollTrack>
          </ToolboxBody>
        </LeftPanel>

        <CenterColumn>
          <TabStrip>
            <DocTab>
              Form1.cs [設計]
              <I s={11} vb="0 0 11 11">
                <path d="M1 1l9 9M10 1l-9 9" stroke="#6f7885" strokeWidth="1.500" />
              </I>
            </DocTab>
            <TabMenu><Caret $s={4} $c="#d9dfea" /></TabMenu>
          </TabStrip>
          <StripeBar />
          <DesignSurface>
            <Selection>
              <FormWindow>
                <FormTitle>
                  <I s={14} vb="0 0 14 14">
                    <rect x="6" y="1" width="7" height="7" fill="#f5cc4a" stroke="#b8862a" />
                    <rect x="1" y="6" width="5" height="5" fill="#c9303a" stroke="#7a1d24" />
                    <rect x="7" y="9" width="5" height="4" fill="#5a8fd0" />
                  </I>
                  Form1
                  <FormButtons>
                    <FormButton>
                      <I s={11} vb="0 0 11 11"><rect x="0" y="6" width="10" height="3" fill="#eef1f5" stroke="#56616f" /></I>
                    </FormButton>
                    <FormButton>
                      <I s={11} vb="0 0 11 11"><rect x="1" y="2" width="9" height="7" fill="none" stroke="#56616f" /><rect x="3.500" y="4.500" width="4" height="2" fill="none" stroke="#56616f" /></I>
                    </FormButton>
                    <FormButton>
                      <I s={11} vb="0 0 11 11"><path d="M1 2l9 7M10 2L1 9" stroke="#56616f" strokeWidth="2" /></I>
                    </FormButton>
                  </FormButtons>
                </FormTitle>
                <FormClient>
                  <HelloLabel>
                    {"Hello World".split("").map((ch, i) => (
                      <HelloChar key={i} $x={helloScale[ch]}>{ch}</HelloChar>
                    ))}
                  </HelloLabel>
                </FormClient>
              </FormWindow>
              <Handle $x={361} $y={93} />
              <Handle $x={179} $y={191} />
              <Handle $x={361} $y={191} />
            </Selection>
          </DesignSurface>
          <StripeBar />
          <DockGap />
          <PanelHeader>
            錯誤清單
            <HeaderButtons />
          </PanelHeader>
          <PanelToolbar $pl={4}>
            <FilterBtn>
              <I>
                <circle cx="8" cy="8" r="7" fill="#d63c2e" />
                <path d="M5.500 5.500l5 5M10.500 5.500l-5 5" stroke="#fff" strokeWidth="1.800" />
              </I>
              0 項錯誤
            </FilterBtn>
            <FilterSep />
            <FilterBtn>
              <I><path d="M8 1l7.500 14H.5z" fill="#f5dc3c" stroke="#555" /><path d="M8 6v5M8 12v2" stroke="#111" strokeWidth="1.500" /></I>
              0 項警告
            </FilterBtn>
            <FilterSep />
            <FilterBtn>
              <I>
                <circle cx="8" cy="8" r="7" fill="#fff" stroke="#3b6db5" strokeWidth="1.500" />
                <path d="M8 4v1.500M8 7v5" stroke="#2a5aa8" strokeWidth="2" />
              </I>
              0 項訊息
            </FilterBtn>
          </PanelToolbar>
          <ErrorList>
            <ErrorRow $h={43}>
              <ErrorCell />
              <ErrorCell />
              <ErrorCell>描述</ErrorCell>
              <ErrorCell>檔案</ErrorCell>
              <ErrorCell>行</ErrorCell>
              <ErrorCell>欄</ErrorCell>
              <ErrorCell>專案</ErrorCell>
            </ErrorRow>
            {[0, 1, 2, 3, 4].map((r) => (
              <ErrorRow key={r}>
                {[0, 1, 2, 3, 4, 5, 6].map((c) => (
                  <ErrorCell key={c} />
                ))}
              </ErrorRow>
            ))}
            <SortMark viewBox="0 0 10 6">
              <path d="M1 5l4-4 4 4" fill="none" stroke="#777" />
            </SortMark>
          </ErrorList>
        </CenterColumn>

        <RightColumn>
          <SolutionPanel>
            <PanelHeader>
              方案總管
              <HeaderButtons />
            </PanelHeader>
            <PanelToolbar $pl={7}>
              <ToolBtn $w={18}>{Solution.view}</ToolBtn>
              <ToolSep $w={8} />
              <ToolBtn $w={22}>{Solution.copy}</ToolBtn>
              <ToolBtn $w={22}>{Solution.refresh}</ToolBtn>
              <ToolSep $w={7} />
              <ToolBtn $w={22}>{Solution.code}</ToolBtn>
              <ToolBtn $w={22}>{Solution.design}</ToolBtn>
            </PanelToolbar>
            <TreeBody>
              <TreeRow $sel>
                <SolutionIcon />
                方案 'HelloWorld' (1 專案)
              </TreeRow>
              <TreeRow $indent={3}>
                <TreeChevron><Chevron dir="down" c="#333" /></TreeChevron>
                <ProjectIcon />
                HelloWorld
              </TreeRow>
              <TreeRow $indent={22}>
                <TreeChevron><Chevron /></TreeChevron>
                <PropertiesIcon />
                Properties
              </TreeRow>
              <TreeRow $indent={22}>
                <TreeChevron><Chevron /></TreeChevron>
                <RefsIcon />
                參考
              </TreeRow>
              <TreeRow $indent={22}>
                <TreeChevron><Chevron /></TreeChevron>
                {Solution.design}
                Form1.cs
              </TreeRow>
              <TreeRow $indent={50}>
                <I>
                  <rect x="4" y="2" width="10" height="13" fill="#fff" stroke="#556" />
                  <path d="M7 8h5M7 10.500h5M7 13h5" stroke="#556" />
                  <text x="5" y="8" fontSize="8" fontWeight="700" textAnchor="middle" fill="#2c9a3a" fontFamily="Liberation Sans">c#</text>
                </I>
                Program.cs
              </TreeRow>
            </TreeBody>
            <BottomTabs>
              <BottomTab>
                <I s={14}>
                  <path d="M3 3h3v4h4V3h3l2 10H9V9H7v4H1z" fill="#8b8878" />
                </I>
                尋找和取代
              </BottomTab>
              <BottomTab $active>
                <FindIcon />
                方案總管
              </BottomTab>
            </BottomTabs>
          </SolutionPanel>

          <PropsPanel>
            <PanelHeader $active>
              屬性
              <HeaderButtons c="#555" />
            </PanelHeader>
            <ObjectBar>
              <ObjectName>Form1</ObjectName>
              <ObjectType>System.Windows.Forms.Form</ObjectType>
              <Caret />
            </ObjectBar>
            <PanelToolbar $h={28} $pl={4}>
              <ToolBtn $w={24}>
                <I>
                  <rect x="1" y="2" width="5" height="5" fill="#fff" stroke="#333" />
                  <rect x="1" y="9" width="5" height="5" fill="#fff" stroke="#333" />
                  <path d="M2.500 4.500h2M2.500 11.500h2M3.500 10.500v2M8 3h7M8 5.500h7M8 10h7M8 12.500h7" stroke="#5a6f8a" />
                </I>
              </ToolBtn>
              <ActiveTool>
                <I>
                  <text x="5" y="7" fontSize="8" fontWeight="700" textAnchor="middle" fill="#3b6db5" fontFamily="Liberation Sans">A</text>
                  <text x="5" y="15" fontSize="8" fontWeight="700" textAnchor="middle" fill="#b03a2e" fontFamily="Liberation Sans">Z</text>
                  <path d="M12 1v13M10 11l2 3 2-3" fill="none" stroke="#111" strokeWidth="1.300" />
                </I>
              </ActiveTool>
              <ToolSep $w={7} />
              <ActiveTool>
                <I><rect x="2" y="2" width="12" height="12" fill="#fff" stroke="#3b4e75" /><path d="M4 5h8M4 8h8M4 11h8" stroke="#3b4e75" /></I>
              </ActiveTool>
              <ToolBtn $w={24}>
                <I><path d="M10 1L3 9h4l-2 6 8-8H9z" fill="#efc23a" stroke="#b5552a" strokeWidth=".8" /></I>
              </ToolBtn>
              <ToolSep $w={8} />
              <ToolBtn $w={24} $dim>
                <I><rect x="1" y="4" width="14" height="10" fill="#e6e6e6" stroke="#777" /><path d="M3 2h5v2H3zM4 7h8M4 10h8" fill="none" stroke="#777" /></I>
              </ToolBtn>
            </PanelToolbar>
            <PropGrid>
              <PropList>
                {propRows.map(([name, value, expand, sel]) => (
                  <PropRow key={name}>
                    <PropGutter>{expand ? <Chevron /> : null}</PropGutter>
                    <PropName $sel={sel}>{name}</PropName>
                    <PropValue>{value === "swatch" ? <ColorSwatch /> : value}</PropValue>
                  </PropRow>
                ))}
              </PropList>
              <PropScroll>
                <ScrollArrow><Chevron dir="up" c="#333" /></ScrollArrow>
                <ScrollThumb $h={23} $top={125} />
                <ScrollArrow><Chevron dir="down" c="#333" /></ScrollArrow>
              </PropScroll>
              <TextCursor viewBox="0 0 9 18">
                <path d="M1 1h7M4.500 1v16M1 17h7" fill="none" stroke="#222" strokeWidth="1.200" />
              </TextCursor>
            </PropGrid>
            <Description>
              Text
              <br />
              與控制項關聯的文字。
            </Description>
          </PropsPanel>
        </RightColumn>
      </Dock>

      <Taskbar>
        <StatusGhost>就緒</StatusGhost>
        <TaskSlot $w={48}><Windows /></TaskSlot>
        <TaskSlot $w={48}>
          <I s={20} vb="0 0 20 20">
            <circle cx="12" cy="8" r="6" fill="none" stroke="#fff" strokeWidth="1.400" />
            <path d="M8 12.500L2 19" stroke="#fff" strokeWidth="1.600" />
          </I>
        </TaskSlot>
        <TaskSlot $w={48}>
          <I s={22} vb="0 0 22 22">
            <rect x="5" y="3" width="12" height="16" fill="none" stroke="#fff" strokeWidth="1.300" />
            <path d="M2 6v10M20 6v10" stroke="#fff" strokeWidth="1.300" />
          </I>
        </TaskSlot>
        <TaskDivider />
        {taskIcons.map((ic, i) => (
          <TaskSlot key={i} $run={runFlags[i]} $active={i === 13}>
            {ic}
          </TaskSlot>
        ))}
        <Battery>38%</Battery>
        <TrayIcon $w={22}>
          <I s={12} vb="0 0 12 12"><path d="M1 9l5-5 5 5" fill="none" stroke="#eee" strokeWidth="1.300" /></I>
        </TrayIcon>
        <TrayIcon $w={22}>
          <I s={18} vb="0 0 18 18">
            <path d="M4 8a11 11 0 0 1 12-4M7 10a7 7 0 0 1 8-3M10 12a4 4 0 0 1 5-2" fill="none" stroke="#666" strokeWidth="1.300" />
            <circle cx="5" cy="12" r="4.500" fill="#d9302a" />
            <path d="M3.500 10.500l3 3M6.500 10.500l-3 3" stroke="#fff" />
          </I>
        </TrayIcon>
        <TrayIcon $w={27}>
          <I s={18} vb="0 0 24 24">
            <path d="M8 2h8l8 14h-8z" fill="#b58e24" />
            <path d="M8 2l8 14-4 7L0 16z" fill="#157a49" />
            <path d="M4 23l4-7h16l-4 7z" fill="#335fa8" />
          </I>
        </TrayIcon>
        <TrayIcon $w={28}>
          <I s={24} vb="0 0 24 16">
            <rect x=".5" y=".5" width="23" height="15" fill="none" stroke="#fff" />
            <path d="M3 4h18M3 7h18M3 10h18M6 13h12" stroke="#fff" strokeDasharray="2 1" />
          </I>
        </TrayIcon>
        <Clock>
          <span>上午 09:10</span>
          <span>2016/10/6</span>
        </Clock>
        <NotifyWrap>
          <I s={16}><path d="M1 1h14v10H7l-3 3v-3H1z" fill="#fff" /><path d="M3 4h10M3 7h10" stroke="#444" /></I>
          <NotifyBadge>1</NotifyBadge>
        </NotifyWrap>
      </Taskbar>
    </Page>
  );
}

export default App;
